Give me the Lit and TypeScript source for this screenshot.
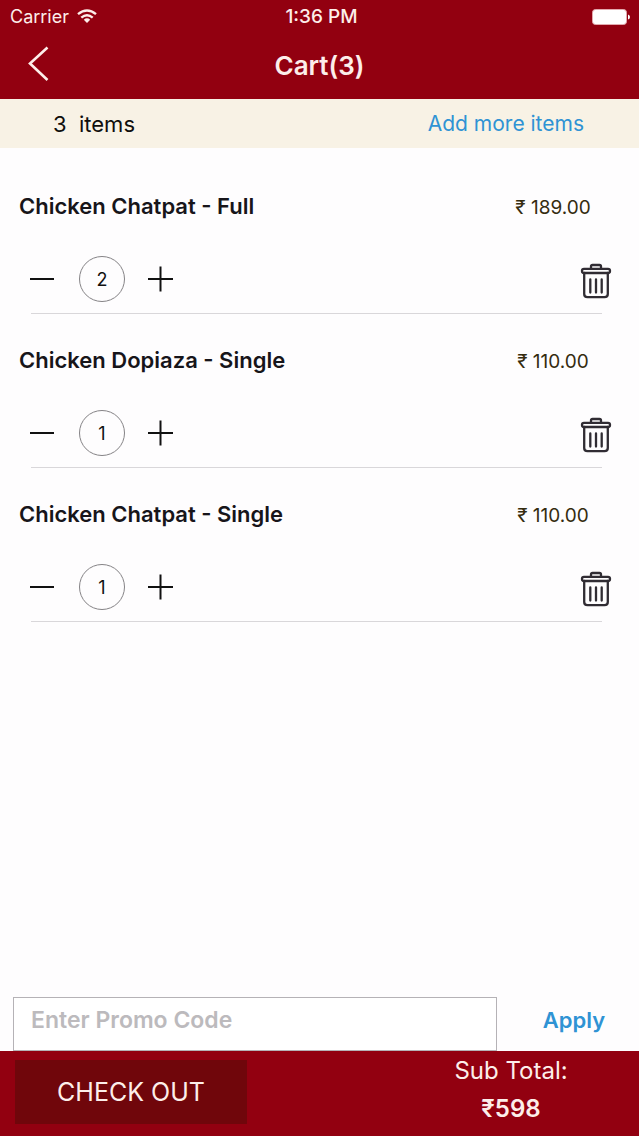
import { LitElement, html, css } from "lit";
import { customElement, property, state } from "lit/decorators.js";

interface CartLine {
  name: string;
  price: number;
  quantity: number;
}

@customElement("cart-item")
class CartItem extends LitElement {
  @property() name = "";
  @property({ type: Number }) price = 0;
  @property({ type: Number }) quantity = 1;

  static styles = css`
    :host {
      display: block;
      padding-top: 32px;
    }
    .heading {
      display: flex;
      align-items: flex-start;
      justify-content: space-between;
      padding-left: 19px;
    }
    .name {
      margin: 0;
      color: #17151a;
      font-size: 22px;
      line-height: 28px;
      font-weight: 600;
    }
    .price {
      width: 172px;
      padding-top: 2px;
      color: #352c10;
      font-size: 19px;
      line-height: 28px;
      text-align: center;
      white-space: nowrap;
    }
    .controls {
      display: flex;
      align-items: center;
      padding: 34px 27px 11px 29px;
    }
    button {
      display: flex;
      padding: 0;
      border: 0;
      background: none;
      color: #111;
      cursor: pointer;
    }
    .quantity {
      box-sizing: border-box;
      width: 46px;
      height: 46px;
      margin: 0 22px 0 24px;
      border: 1px solid #858386;
      border-radius: 50%;
      color: #111;
      font-size: 18px;
      line-height: 45px;
      text-align: center;
    }
    .remove {
      margin-left: auto;
      padding-top: 4px;
      color: #302c33;
    }
    .divider {
      height: 1px;
      margin: 0 37px 0 31px;
      border: 0;
      background: #d9d7da;
    }
  `;

  private change(step: number) {
    this.dispatchEvent(new CustomEvent("quantity-change", { detail: step }));
  }

  render() {
    return html`
      <div class="heading">
        <h2 class="name">${this.name}</h2>
        <span class="price">₹ ${this.price.toFixed(2)}</span>
      </div>
      <div class="controls">
        <button aria-label="Decrease quantity" @click=${() => this.change(-1)}>
          <svg width="26" height="28" viewBox="0 0 26 28" fill="none" stroke="currentColor" stroke-width="2">
            <path d="M1 14H25" />
          </svg>
        </button>
        <output class="quantity">${this.quantity}</output>
        <button aria-label="Increase quantity" @click=${() => this.change(1)}>
          <svg width="28" height="28" viewBox="0 0 28 28" fill="none" stroke="currentColor" stroke-width="2">
            <path d="M1 14H26M13.5 1.5V26.5" />
          </svg>
        </button>
        <button class="remove" aria-label="Remove item" @click=${() => this.dispatchEvent(new CustomEvent("remove-item"))}>
          <svg width="32" height="36" viewBox="0 0 32 36" fill="none" stroke="currentColor" stroke-width="2.3" stroke-linejoin="round" stroke-linecap="round">
            <path d="M11 5.5V3.5Q11 2 12.500 2H19.500Q21 2 21 3.500V5.500" />
            <rect x="2" y="5.800" width="28" height="4.200" rx="2" />
            <path d="M4.200 10V31Q4.200 34.200 7.500 34.200H24.500Q27.800 34.200 27.800 31V10" />
            <path d="M10.300 16.500V29.500M16 16.500V29.500M21.700 16.500V29.500" />
          </svg>
        </button>
      </div>
      <hr class="divider" />
    `;
  }
}

@customElement("app-root")
class AppRoot extends LitElement {
  @state() private lines: CartLine[] = [
    { name: "Chicken Chatpat - Full", price: 189, quantity: 2 },
    { name: "Chicken Dopiaza - Single", price: 110, quantity: 1 },
    { name: "Chicken Chatpat - Single", price: 110, quantity: 1 },
  ];

  static styles = css`
    :host {
      display: flex;
      flex-direction: column;
      min-height: 100vh;
      background: #fefdfe;
      color: #0f0e0c;
      font-family: Inter, "Noto Sans", sans-serif;
    }
    .top {
      background: #920010;
      color: #fdeeea;
    }
    .status,
    .nav {
      display: grid;
      grid-template-columns: 1fr auto 1fr;
      align-items: center;
    }
    .status {
      padding: 0 8px 0 10px;
      font-size: 18px;
      line-height: 33px;
    }
    .carrier {
      display: flex;
      align-items: center;
      gap: 8px;
    }
    .time {
      padding-left: 2px;
      font-size: 19px;
      font-weight: 500;
    }
    .battery {
      justify-self: end;
    }
    .nav {
      padding: 0 28px;
    }
    .title {
      margin: 0;
      font-size: 26px;
      line-height: 66px;
      font-weight: 600;
    }
    button {
      padding: 0;
      border: 0;
      background: none;
      color: inherit;
      font: inherit;
      cursor: pointer;
    }
    .back {
      display: flex;
      justify-self: start;
      padding-bottom: 4px;
    }
    .summary {
      display: flex;
      justify-content: space-between;
      padding: 1px 55px 0 53px;
      background: #f8f2e5;
      font-size: 22px;
      line-height: 48px;
    }
    .count {
      white-space: pre;
    }
    .more {
      color: #2f93d4;
      font-size: 21px;
      text-decoration: none;
    }
    .items {
      flex: 1;
      padding-top: 12px;
    }
    .promo {
      display: flex;
      padding-left: 13px;
    }
    .code {
      box-sizing: border-box;
      flex: 1;
      min-width: 0;
      height: 54px;
      padding: 0 17px 8px;
      border: 1px solid #b5b2b6;
      border-radius: 0;
      outline: 0;
      background: #fff;
      color: #333;
      font: inherit;
      font-size: 23px;
      font-weight: 600;
    }
    .code::placeholder {
      color: #bcbabd;
      opacity: 1;
    }
    .apply {
      width: 142px;
      padding: 0 0 8px 12px;
      color: #2f93d4;
      font-size: 22px;
      font-weight: 600;
    }
    .footer {
      display: flex;
      justify-content: space-between;
      background: #920010;
      color: #fdeeea;
    }
    .checkout {
      width: 232px;
      height: 64px;
      margin: 9px 0 12px 15px;
      background: #70060b;
      font-size: 25px;
    }
    .total {
      width: 256px;
      padding-top: 1px;
      font-size: 24px;
      line-height: 38px;
      text-align: center;
    }
    .amount {
      display: block;
      font-weight: 600;
    }
  `;

  private changeQuantity(line: CartLine, step: number) {
    this.lines = this.lines.map((l) => (l === line ? { ...l, quantity: Math.max(1, l.quantity + step) } : l));
  }

  private remove(line: CartLine) {
    this.lines = this.lines.filter((l) => l !== line);
  }

  render() {
    const total = this.lines.reduce((sum, l) => sum + l.price * l.quantity, 0);
    return html`
      <header class="top">
        <div class="status">
          <span class="carrier">
            Carrier
            <svg width="20" height="15" viewBox="0 0 20 15" fill="none" stroke="currentColor" stroke-width="2.400" aria-hidden="true">
              <path d="M1 5.200Q10-2.400 19 5.200M4.300 8.700Q10 3.900 15.700 8.700" />
              <path d="M6.800 10.700Q10 8 13.200 10.700L10 14Z" fill="currentColor" stroke="none" />
            </svg>
          </span>
          <span class="time">1:36 PM</span>
          <svg class="battery" width="39" height="16" viewBox="0 0 39 16" aria-hidden="true">
            <rect x=".5" y=".5" width="34" height="15" rx="3" fill="#fff" stroke="#e3a9ae" />
            <path d="M36 5.500Q38 6 38 8T36 10.500Z" fill="#fff" />
          </svg>
        </div>
        <nav class="nav">
          <button class="back" aria-label="Back">
            <svg width="22" height="36" viewBox="0 0 22 36" fill="none" stroke="currentColor" stroke-width="2.600">
              <path d="M19.500 1.500L2 17.500L19.500 34" />
            </svg>
          </button>
          <h1 class="title">Cart(${this.lines.length})</h1>
        </nav>
      </header>
      <div class="summary">
        <span class="count">${this.lines.length}  items</span>
        <a class="more" href="#menu">Add more items</a>
      </div>
      <main class="items">
        ${this.lines.map(
          (line) => html`<cart-item
            .name=${line.name}
            .price=${line.price}
            .quantity=${line.quantity}
            @quantity-change=${(e: CustomEvent<number>) => this.changeQuantity(line, e.detail)}
            @remove-item=${() => this.remove(line)}
          ></cart-item>`
        )}
      </main>
      <form class="promo" @submit=${(e: Event) => e.preventDefault()}>
        <input class="code" type="text" placeholder="Enter Promo Code" aria-label="Promo code" />
        <button class="apply" type="submit">Apply</button>
      </form>
      <footer class="footer">
        <button class="checkout">CHECK OUT</button>
        <div class="total">
          Sub Total:
          <strong class="amount">₹${total}</strong>
        </div>
      </footer>
    `;
  }
}
